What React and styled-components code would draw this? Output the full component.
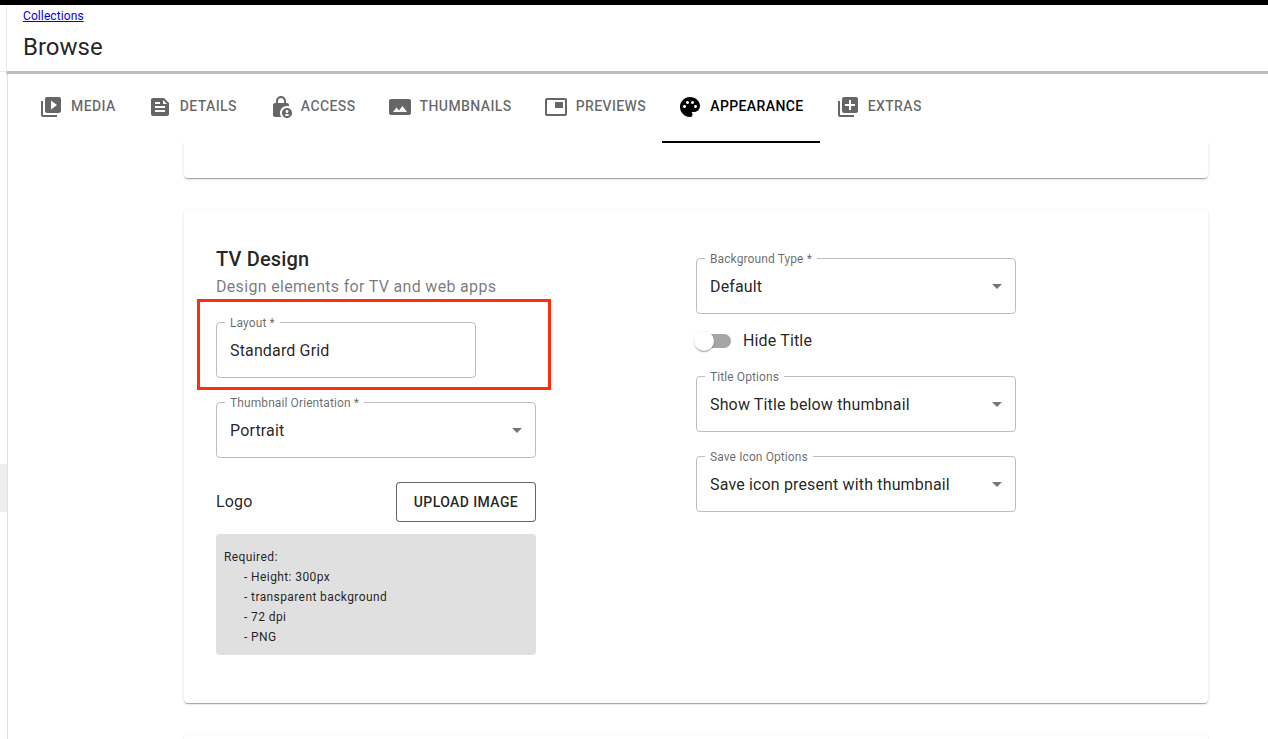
import React from 'react';
import styled, { createGlobalStyle } from 'styled-components';
import {
  MdVideoLibrary,
  MdFeed,
  MdLockPerson,
  MdPanorama,
  MdPictureInPicture,
  MdPalette,
  MdLibraryAdd,
} from 'react-icons/md';

const GlobalStyle = createGlobalStyle`
  html, body {
    margin: 0;
    padding: 0;
    background: #fff;
    font-family: Roboto, "Liberation Sans", sans-serif;
    color: rgba(0, 0, 0, 0.87);
  }
`;

const Page = styled.div`
  position: relative;
  width: 1268px;
  height: 739px;
  overflow: hidden;
  background: #fff;
`;

const BlackBar = styled.div`
  height: 5px;
  background: #000;
`;

const SideStrip = styled.div`
  position: absolute;
  left: 0;
  top: 464px;
  width: 7px;
  height: 48px;
  background: #eeeeee;
`;

const SideRule = styled.div`
  position: absolute;
  left: 0;
  top: 71px;
  width: 7px;
  height: 1px;
  background: #e8e8e8;
`;

const Main = styled.div`
  margin-left: 6px;
  height: 734px;
`;

const Header = styled.header`
  height: 66px;
  padding-left: 16px;
  border-left: 1px solid #e8e8e8;
  border-bottom: 3px solid #bdbdbd;
`;

const Crumb = styled.a`
  display: block;
  padding-top: 5px;
  height: 17px;
  font-size: 12px;
  line-height: 13px;
  letter-spacing: 0.1px;
  color: #0000ee;
  text-decoration: underline;
`;

const Title = styled.h1`
  margin: 3px 0 0;
  font-size: 24px;
  line-height: 34px;
  font-weight: 400;
  letter-spacing: 0;
  color: rgba(0, 0, 0, 0.87);
`;

const Body = styled.div`
  height: 665px;
  margin-left: 1px;
  border-left: 1px solid #e0e0e0;
`;

const TabBar = styled.nav`
  display: flex;
  height: 69px;
  padding-left: 15px;
`;

const Tab = styled.div`
  display: flex;
  align-items: center;
  gap: 8px;
  height: 69px;
  padding: 0 16px 3px;
  box-sizing: border-box;
  font-size: 14px;
  font-weight: 500;
  letter-spacing: 0.4px;
  text-transform: uppercase;
  color: ${(p) => (p.$active ? '#000' : 'rgba(0, 0, 0, 0.6)')};
  border-bottom: 2px solid ${(p) => (p.$active ? '#000' : 'transparent')};

  svg {
    position: relative;
    top: 1px;
    width: 24px;
    height: 24px;
    flex: none;
  }
`;

const Scroller = styled.div`
  height: 596px;
  overflow: hidden;
  padding: 0 60px 0 176px;
`;

const Card = styled.section`
  background: #fff;
  border-radius: 4px;
  box-shadow: 0 2px 1px -1px rgba(0, 0, 0, 0.2), 0 1px 1px 0 rgba(0, 0, 0, 0.14),
    0 1px 3px 0 rgba(0, 0, 0, 0.12);
`;

const StubCard = styled(Card)`
  height: 65px;
  margin-top: -30px;
`;

const DesignCard = styled(Card)`
  display: flex;
  gap: 160px;
  height: 493px;
  margin-top: 32px;
  padding: 32px;
  box-sizing: border-box;
`;

const NextCard = styled(Card)`
  height: 60px;
  margin-top: 32px;
`;

const Column = styled.div`
  position: relative;
  width: 320px;
`;

const Heading = styled.h2`
  margin: 0;
  padding-top: 1px;
  font-size: 20px;
  line-height: 32px;
  font-weight: 500;
  letter-spacing: 0.15px;
`;

const Subheading = styled.p`
  margin: 0 0 23px;
  font-size: 16px;
  line-height: 24px;
  letter-spacing: 0.32px;
  color: rgba(0, 0, 0, 0.54);
`;

const Field = styled.div`
  position: relative;
  display: flex;
  align-items: center;
  justify-content: space-between;
  width: ${(p) => p.$width || 320}px;
  height: 56px;
  margin-top: ${(p) => p.$top || 0}px;
  padding: 0 13px;
  box-sizing: border-box;
  border: 1px solid rgba(0, 0, 0, 0.26);
  border-radius: 4px;
  font-size: 16px;
  letter-spacing: 0.15px;
`;

const FieldLabel = styled.label`
  position: absolute;
  left: 8px;
  top: -7px;
  padding: 0 5px;
  background: #fff;
  font-size: 12px;
  line-height: 14px;
  letter-spacing: 0.1px;
  color: rgba(0, 0, 0, 0.6);
  white-space: nowrap;
`;

const Caret = styled.span`
  width: 0;
  height: 0;
  border-left: 5px solid transparent;
  border-right: 5px solid transparent;
  border-top: 5px solid rgba(0, 0, 0, 0.54);
`;

const LogoRow = styled.div`
  display: flex;
  align-items: center;
  justify-content: space-between;
  height: 40px;
  margin-top: 24px;
  font-size: 16px;
  letter-spacing: 0.15px;
`;

const LogoLabel = styled.span`
  position: relative;
  top: -1px;
`;

const UploadButton = styled.button`
  width: 140px;
  height: 40px;
  padding: 0;
  background: #fff;
  border: 1px solid rgba(0, 0, 0, 0.6);
  border-radius: 4px;
  font-family: inherit;
  font-size: 14px;
  font-weight: 500;
  letter-spacing: 0.4px;
  color: rgba(0, 0, 0, 0.87);
`;

const Notes = styled.div`
  height: 121px;
  margin-top: 12px;
  padding: 13px 8px 0;
  box-sizing: border-box;
  background: #e0e0e0;
  border-radius: 4px;
  font-size: 12px;
  line-height: 20px;
  letter-spacing: 0.4px;
`;

const NoteLine = styled.div`
  padding-left: ${(p) => (p.$indent ? 20 : 0)}px;
`;

const SwitchRow = styled.div`
  display: flex;
  align-items: center;
  height: 38px;
  margin-top: 8px;
  margin-bottom: 16px;
  font-size: 16px;
  letter-spacing: 0.15px;
`;

const SwitchLabel = styled.span`
  position: relative;
  top: -1px;
`;

const SwitchTrack = styled.span`
  position: relative;
  width: 27px;
  height: 14px;
  margin-left: 8px;
  margin-right: 12px;
  background: #a6a6a6;
  border-radius: 7px;
`;

const SwitchThumb = styled.span`
  position: absolute;
  left: -10px;
  top: -3px;
  width: 20px;
  height: 20px;
  background: #fff;
  border-radius: 50%;
  box-shadow: 0 2px 1px -1px rgba(0, 0, 0, 0.2), 0 1px 1px 0 rgba(0, 0, 0, 0.14),
    0 1px 3px 0 rgba(0, 0, 0, 0.12);
`;

const Highlight = styled.div`
  position: absolute;
  left: 197px;
  top: 299px;
  width: 354px;
  height: 91px;
  box-sizing: border-box;
  border: 3px solid #ff2d0a;
  pointer-events: none;
`;

const tabs = [
  { label: 'Media', icon: MdVideoLibrary },
  { label: 'Details', icon: MdFeed },
  { label: 'Access', icon: MdLockPerson },
  { label: 'Thumbnails', icon: MdPanorama },
  { label: 'Previews', icon: MdPictureInPicture },
  { label: 'Appearance', icon: MdPalette, active: true },
  { label: 'Extras', icon: MdLibraryAdd },
];

const notes = ['- Height: 300px', '- transparent background', '- 72 dpi', '- PNG'];

const SelectField = ({ label, value, top }) => (
  <Field $top={top}>
    <FieldLabel>{label}</FieldLabel>
    {value}
    <Caret />
  </Field>
);

const App = () => {
  return (
    <Page>
      <GlobalStyle />
      <BlackBar />
      <SideRule />
      <SideStrip />
      <Main>
        <Header>
          <Crumb href="#">Collections</Crumb>
          <Title>Browse</Title>
        </Header>
        <Body>
          <TabBar>
            {tabs.map(({ label, icon: Icon, active }) => (
              <Tab key={label} $active={active}>
                <Icon />
                {label}
              </Tab>
            ))}
          </TabBar>
          <Scroller>
            <StubCard />
            <DesignCard>
              <Column>
                <Heading>TV Design</Heading>
                <Subheading>Design elements for TV and web apps</Subheading>
                <Field $width={260}>
                  <FieldLabel>Layout *</FieldLabel>
                  Standard Grid
                </Field>
                <SelectField label="Thumbnail Orientation *" value="Portrait" top={24} />
                <LogoRow>
                  <LogoLabel>Logo</LogoLabel>
                  <UploadButton>UPLOAD IMAGE</UploadButton>
                </LogoRow>
                <Notes>
                  <NoteLine>Required:</NoteLine>
                  {notes.map((line) => (
                    <NoteLine key={line} $indent>
                      {line}
                    </NoteLine>
                  ))}
                </Notes>
              </Column>
              <Column>
                <SelectField label="Background Type *" value="Default" top={16} />
                <SwitchRow>
                  <SwitchTrack>
                    <SwitchThumb />
                  </SwitchTrack>
                  <SwitchLabel>Hide Title</SwitchLabel>
                </SwitchRow>
                <SelectField label="Title Options" value="Show Title below thumbnail" />
                <SelectField label="Save Icon Options" value="Save icon present with thumbnail" top={24} />
              </Column>
            </DesignCard>
            <NextCard />
          </Scroller>
        </Body>
      </Main>
      <Highlight />
    </Page>
  );
};

export default App;
